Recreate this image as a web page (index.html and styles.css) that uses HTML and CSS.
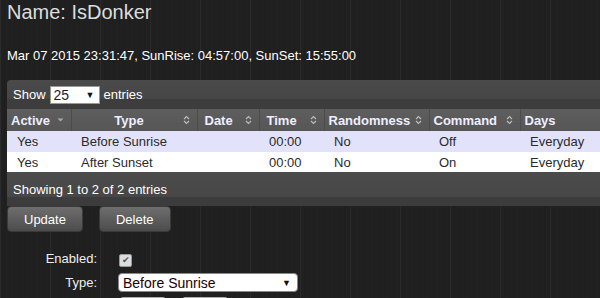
FILE: index.html
```html
<!DOCTYPE html>
<html lang="en">
<head>
<meta charset="UTF-8" />
<title>Timers - IsDonker</title>
<link rel="stylesheet" href="styles.css">
</head>
<body>
  <h1 class="dev-name">Name: IsDonker</h1>
  <p class="sun-info">Mar 07 2015 23:31:47, SunRise: 04:57:00, SunSet: 15:55:00</p>

  <div class="table-wrap">
    <div class="toolbar">
      Show
      <span class="len-select">25 <span class="arrow">&#9660;</span></span>
      entries
    </div>

    <table class="timers">
      <colgroup>
        <col class="c-active"><col class="c-type"><col class="c-date"><col class="c-time">
        <col class="c-rand"><col class="c-cmd"><col class="c-days">
      </colgroup>
      <thead>
        <tr>
          <th><div class="th-in"><span>Active</span>
            <svg class="sort" width="7" height="10" viewBox="0 0 7 10"><path d="M0.5 3.5 L6.5 3.5 L3.5 6.5 Z" fill="#a8a8a8"/></svg></div></th>
          <th><div class="th-in"><span class="center">Type</span>
            <svg class="sort" width="7" height="10" viewBox="0 0 7 10"><path d="M1 4 L3.5 1.5 L6 4 M1 6 L3.5 8.5 L6 6" fill="none" stroke="#bbb" stroke-width="1.2"/></svg></div></th>
          <th class="pad"><div class="th-in"><span>Date</span>
            <svg class="sort" width="7" height="10" viewBox="0 0 7 10"><path d="M1 4 L3.5 1.5 L6 4 M1 6 L3.5 8.5 L6 6" fill="none" stroke="#bbb" stroke-width="1.2"/></svg></div></th>
          <th class="pad"><div class="th-in"><span>Time</span>
            <svg class="sort" width="7" height="10" viewBox="0 0 7 10"><path d="M1 4 L3.5 1.5 L6 4 M1 6 L3.5 8.5 L6 6" fill="none" stroke="#bbb" stroke-width="1.2"/></svg></div></th>
          <th><div class="th-in"><span>Randomness</span>
            <svg class="sort" width="7" height="10" viewBox="0 0 7 10"><path d="M1 4 L3.5 1.5 L6 4 M1 6 L3.5 8.5 L6 6" fill="none" stroke="#bbb" stroke-width="1.2"/></svg></div></th>
          <th><div class="th-in"><span>Command</span>
            <svg class="sort" width="7" height="10" viewBox="0 0 7 10"><path d="M1 4 L3.5 1.5 L6 4 M1 6 L3.5 8.5 L6 6" fill="none" stroke="#bbb" stroke-width="1.2"/></svg></div></th>
          <th><div class="th-in"><span>Days</span></div></th>
        </tr>
      </thead>
      <tbody>
        <tr class="selected">
          <td>Yes</td><td>Before Sunrise</td><td></td><td>00:00</td><td>No</td><td>Off</td><td>Everyday</td>
        </tr>
        <tr>
          <td>Yes</td><td>After Sunset</td><td></td><td>00:00</td><td>No</td><td>On</td><td>Everyday</td>
        </tr>
      </tbody>
    </table>

    <div class="table-foot">Showing 1 to 2 of 2 entries</div>
  </div>

  <div class="actions">
    <button class="btn">Update</button>
    <button class="btn">Delete</button>
  </div>

  <div class="timer-form">
    <label>Enabled:</label>
    <div><span class="check">&#10004;</span></div>

    <label>Type:</label>
    <div class="type-select">Before Sunrise <span class="arrow">&#9660;</span></div>

    <label></label>
    <div class="time-row"><span class="box"></span><span class="box"></span></div>
  </div>
</body>
</html>
```

FILE: styles.css
```css
html { overflow: hidden; }
body {
  margin: 0;
  padding: 0 7px;
  font-family: "Liberation Sans", Arial, sans-serif;
  font-size: 13px;
  color: #fff;
  background-color: #1f1f1f;
  background-image:
    repeating-linear-gradient(90deg, rgba(255,255,255,0.05) 0, rgba(255,255,255,0.05) 1px, transparent 1px, transparent 50px),
    repeating-linear-gradient(90deg, #1d1d1d 0, #232323 1px, #1e1e1e 2px, #222 3px, #1c1c1c 5px);
  width: 600px;
  height: 298px;
  box-sizing: border-box;
}

.dev-name { margin: 1px 0 0; font-size: 20px; font-weight: normal; line-height: 23px; color: #ddd; }
.sun-info { margin: 24px 0 0; line-height: 15px; }

.table-wrap { margin-top: 17px; width: 603px; }

.toolbar {
  height: 29px;
  display: flex;
  align-items: center;
  gap: 4px;
  padding-left: 6px;
  border-top-left-radius: 4px;
  background: linear-gradient(#4a4a4a 0, #464646 65%, #3d3d3d 66%, #3d3d3d 100%);
}
.len-select {
  display: inline-flex;
  justify-content: space-between;
  align-items: center;
  width: 41px;
  height: 16px;
  padding: 0 4px 0 3px;
  background: #fff;
  border: 1px solid #999;
  color: #1a1a3a;
  font-size: 14px;
}
.arrow { font-size: 9px; color: #111; }

.timers { border-collapse: collapse; table-layout: fixed; width: 603px; }
.c-active { width: 64px; }
.c-type { width: 126px; }
.c-date { width: 62px; }
.c-time { width: 65px; }
.c-rand { width: 105px; }
.c-cmd { width: 91px; }
.c-days { width: 90px; }

.timers th {
  height: 22px;
  padding: 0 7px 0 4px;
  background: linear-gradient(#5e5e5e, #565656);
  border-right: 1px solid #4c4c4c;
  color: #eef;
  font-weight: bold;
  text-align: left;
}
.timers th.pad { padding-left: 7px; }
.th-in { display: flex; align-items: center; justify-content: space-between; }
.th-in .center { flex: 1; text-align: center; }
.sort { flex: none; }

.timers td { height: 20px; padding: 0 0 0 10px; color: #2a2a2a; background: #fff; white-space: nowrap; }
.timers tr.selected td { background: #e2e3fb; height: 21px; }

.table-foot {
  height: 34px;
  display: flex;
  align-items: center;
  padding-left: 6px;
  background: linear-gradient(#4b4b4b 0, #474747 74%, #3c3c3c 75%, #3c3c3c 100%);
}

.actions { display: flex; gap: 16px; }
.btn {
  height: 26px;
  padding: 0 16px;
  border: 1px solid #3a3a3a;
  border-radius: 4px;
  background: linear-gradient(#6e6e6e, #4c4c4c);
  color: #fff;
  font-family: inherit;
  font-size: 13px;
}

.timer-form {
  display: grid;
  grid-template-columns: 90px 180px;
  column-gap: 21px;
  row-gap: 5px;
  align-items: center;
  margin-top: 18px;
}
.timer-form label { text-align: right; color: #eee; line-height: 18px; }
.check {
  display: inline-flex;
  align-items: center;
  justify-content: center;
  width: 11px;
  height: 11px;
  margin-left: 1px;
  background: #ddd;
  border: 1px solid #999;
  border-radius: 2px;
  color: #555;
  font-size: 9px;
}
.type-select {
  display: flex;
  justify-content: space-between;
  align-items: center;
  height: 17px;
  padding: 0 6px 0 4px;
  background: #fff;
  border: 1px solid #888;
  border-radius: 4px;
  color: #200;
  font-size: 14px;
}
.time-row { display: flex; gap: 16px; padding-left: 2px; }
.box { width: 44px; height: 18px; background: #ececec; border: 1px solid #aaa; border-radius: 3px; }
```
